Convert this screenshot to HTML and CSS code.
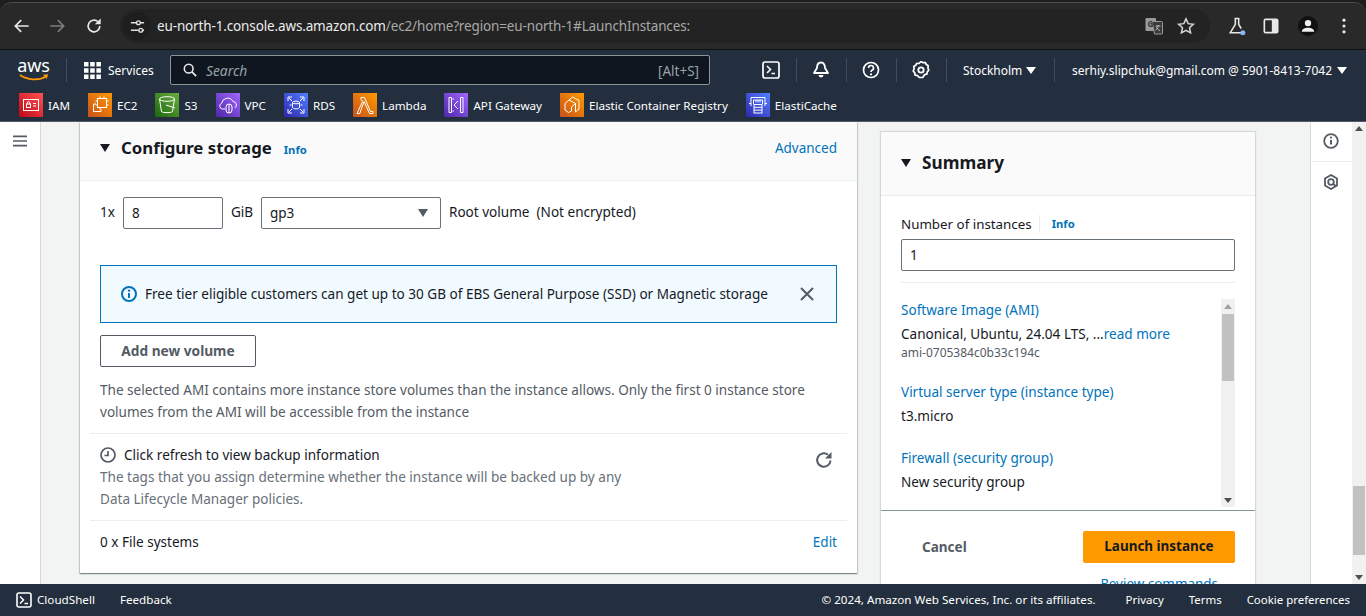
FILE: index.html
```html
<!DOCTYPE html>
<html lang="en">
<head>
<meta charset="utf-8">
<title>Launch an instance | EC2</title>
<link rel="stylesheet" href="styles.css">
</head>
<body>
<div class="app">
  <header class="browser">
   <div class="toolbar">
    <svg class="bi" viewBox="0 0 24 24"><path d="M20 12H5M11 5l-7 7 7 7" fill="none" stroke="#e8e8e8" stroke-width="2"/></svg>
    <svg class="bi bi-fwd" viewBox="0 0 24 24"><path d="M4 12h15M13 5l7 7-7 7" fill="none" stroke="#7d7d7d" stroke-width="2"/></svg>
    <svg class="bi bi-reload" viewBox="0 0 24 24"><path d="M19 12a7 7 0 1 1-2.200-5.100L19 9" fill="none" stroke="#e8e8e8" stroke-width="2"/><path d="M20 3v7h-7z" fill="#e8e8e8"/></svg>
    <div class="omni">
      <span class="tune-chip"><svg class="tune" viewBox="0 0 16 16"><path d="M1 4h6M1 12h8M13 12h2M11 4h4" stroke="#e0e0e0" stroke-width="1.600" fill="none"/><circle cx="9" cy="4" r="2" fill="none" stroke="#e0e0e0" stroke-width="1.500"/><circle cx="11.500" cy="12" r="2" fill="none" stroke="#e0e0e0" stroke-width="1.500"/></svg></span>
      <span class="url"><span class="url-host">eu-north-1.console.aws.amazon.com</span>/ec2/home?region=eu-north-1#LaunchInstances:</span>
      <svg class="translate" viewBox="0 0 18 18"><rect x="0.500" y="1" width="10.500" height="13" rx="1" fill="#9a9a9a"/><path d="M7 4.500h9.500a1 1 0 0 1 1 1V16a1 1 0 0 1-1 1H9.500z" fill="#3a3a3a" stroke="#9a9a9a"/><text x="2.400" y="10" class="translate-g">G</text><path d="M10.500 9h5M13 8v1.500c0 2-1.500 3-2.500 3.500M11.500 10.500c.6 1.300 2 2.500 3.500 3" stroke="#bdbdbd" fill="none"/></svg>
      <svg class="star" viewBox="0 0 24 24"><path d="M12 3.500l2.600 5.700 6.200.7-4.600 4.200 1.300 6.100-5.500-3.100-5.500 3.100 1.300-6.100-4.600-4.200 6.200-.7z" fill="none" stroke="#d8d8d8" stroke-width="1.800"/></svg>
    </div>
    <svg class="bi flask" viewBox="0 0 24 24"><path d="M9 3h6M10 3v7l-6 10h13M14 3v7l3 5" fill="none" stroke="#e8e8e8" stroke-width="1.900"/><circle cx="19" cy="20" r="3" fill="#8ab4f8"/></svg>
    <svg class="bi panel-ic" viewBox="0 0 24 24"><rect x="4" y="4" width="16" height="16" rx="1.500" fill="none" stroke="#e8e8e8" stroke-width="2"/><rect x="13" y="4" width="7" height="16" fill="#e8e8e8"/></svg>
    <span class="profile"><svg viewBox="0 0 24 24"><circle cx="12" cy="8.500" r="3.800" fill="#f0f0f0"/><path d="M4.500 19c0-3.500 4-5 7.500-5s7.500 1.500 7.500 5z" fill="#f0f0f0"/></svg></span>
    <svg class="bi dots" viewBox="0 0 24 24"><circle cx="12" cy="5" r="1.900" fill="#e8e8e8"/><circle cx="12" cy="12" r="1.900" fill="#e8e8e8"/><circle cx="12" cy="19" r="1.900" fill="#e8e8e8"/></svg>
   </div>
  </header>

  <nav class="nav">
    <div class="nav-top">
      <div class="logo"><span class="logo-text">aws</span>
        <svg class="logo-smile" viewBox="0 0 30 8"><path d="M1 1c7 5 19 6 26 1.500" fill="none" stroke="#f90" stroke-width="1.800"/><path d="M24 .8l5-.6-1.200 4.800z" fill="#f90"/></svg>
      </div>
      <span class="vsep vsep-logo"></span>
      <svg class="grid-ic" viewBox="0 0 17 17"><path d="M0 0h4.500v4.500H0zM6.200 0h4.500v4.500H6.200zM12.400 0h4.500v4.500h-4.500zM0 6.200h4.500v4.500H0zM6.200 6.200h4.500v4.500H6.200zM12.400 6.200h4.500v4.500h-4.500zM0 12.400h4.500v4.500H0zM6.200 12.400h4.500v4.500H6.200zM12.400 12.400h4.500v4.500h-4.500z" fill="#fff"/></svg>
      <span class="services">Services</span>
      <div class="search">
        <svg class="search-ic" viewBox="0 0 16 16"><circle cx="6.500" cy="6.500" r="5" fill="none" stroke="#e8eaea" stroke-width="1.800"/><path d="M10.200 10.200L15 15" stroke="#e8eaea" stroke-width="2"/></svg>
        <span class="search-ph">Search</span>
        <span class="search-key">[Alt+S]</span>
      </div>
      <div class="nav-icons">
        <span class="nav-ic"><svg viewBox="0 0 18 18"><rect x="1" y="1" width="16" height="16" rx="2" fill="none" stroke="#fff" stroke-width="1.700"/><path d="M5 5l3.500 3.500L5 12M9.500 12.500H13" fill="none" stroke="#fff" stroke-width="1.600"/></svg></span>
        <span class="vsep"></span>
        <span class="nav-ic"><svg viewBox="0 0 18 18"><path d="M9 1.500c-3 0-4 2.500-4 5.500L2 12h14l-3-5c0-3-1-5.500-4-5.500z" fill="none" stroke="#fff" stroke-width="1.800" stroke-linejoin="round"/><path d="M6.500 14a2.500 2.500 0 0 0 5 0z" fill="#fff"/></svg></span>
        <span class="vsep"></span>
        <span class="nav-ic"><svg viewBox="0 0 18 18"><circle cx="9" cy="9" r="7.500" fill="none" stroke="#fff" stroke-width="1.700"/><path d="M6.500 7a2.500 2.500 0 1 1 3.500 2.300c-.7.300-1 .8-1 1.700" fill="none" stroke="#fff" stroke-width="1.700"/><circle cx="9" cy="13.300" r="1.100" fill="#fff"/></svg></span>
        <span class="vsep"></span>
        <span class="nav-ic"><svg viewBox="0 0 18 18"><path d="M9 1l2 1.200 2.300-.2 1 2 2 1.200-.4 2.300.9 2.100-1.500 1.800-.5 2.300-2.300.5L10.700 17H7.300l-1.800-1.800-2.300-.5-.5-2.300L1.200 10.500l.9-2.100L1.700 6l2-1.200 1-2L7 3z" transform="translate(0 -.5)" fill="none" stroke="#fff" stroke-width="1.700" stroke-linejoin="round"/><circle cx="9" cy="9" r="2.700" fill="none" stroke="#fff" stroke-width="1.800"/></svg></span>
        <span class="vsep"></span>
      </div>
      <span class="region">Stockholm<i class="caret-w"></i></span>
      <span class="vsep"></span>
      <span class="account">serhiy.slipchuk@gmail.com @ 5901-8413-7042<i class="caret-w"></i></span>
    </div>
    <div class="nav-fav">
      <span class="fav"><span class="svc red"><svg viewBox="0 0 24 24"><rect x="4.500" y="6.500" width="15" height="11" fill="none" stroke="#fff"/><rect x="7.500" y="11" width="4" height="3.500" fill="none" stroke="#fff"/><path d="M8.300 11V9.800a1.200 1.200 0 0 1 2.400 0V11M14 10.500h3M14 13h3" fill="none" stroke="#fff"/></svg></span>IAM</span>
      <span class="fav"><span class="svc orange"><svg viewBox="0 0 24 24"><rect x="9.500" y="5.500" width="9" height="9" fill="none" stroke="#fff"/><path d="M8 18.500H5.500V11H8M5.500 18.500H13V16M12 3.500v2M16 3.500v2M12 14.500v2M20.500 8h-2M20.500 12h-2M7.500 8h2M7.500 12h2" fill="none" stroke="#fff"/></svg></span>EC2</span>
      <span class="fav"><span class="svc green"><svg viewBox="0 0 24 24"><ellipse cx="12" cy="6" rx="7.500" ry="2.300" fill="none" stroke="#fff"/><path d="M4.500 6l2 12.500c.5 1.500 10.500 1.500 11 0l2-12.500M11 12l9 3" fill="none" stroke="#fff"/></svg></span>S3</span>
      <span class="fav"><span class="svc purple"><svg viewBox="0 0 24 24"><path d="M9 16H6.500a3 3 0 0 1-.8-5.800A6 6 0 0 1 17 8.500a3.500 3.500 0 0 1 2 6.300" fill="none" stroke="#fff"/><rect x="10" y="11" width="6" height="9" rx="3" fill="none" stroke="#fff"/><path d="M13 11v9" stroke="#fff"/></svg></span>VPC</span>
      <span class="fav"><span class="svc blue"><svg viewBox="0 0 24 24"><path d="M4 8V4h4M16 4h4v4M4 16v4h4M20 16v4h-4M5 5l3 3M19 5l-3 3M5 19l3-3M19 19l-3-3" fill="none" stroke="#fff"/><ellipse cx="12" cy="9.500" rx="3.500" ry="1.300" fill="none" stroke="#fff"/><path d="M8.500 9.500v5c0 1.800 7 1.800 7 0v-5M5.500 12H7.500M16.500 12h2" fill="none" stroke="#fff"/></svg></span>RDS</span>
      <span class="fav"><span class="svc orange"><svg viewBox="0 0 24 24"><path d="M8 4.500h3.500L17.500 18.500H20v2h-3.500L11 8.500 6.800 20.500H4l5.500-12-1.500-2z" fill="none" stroke="#fff"/></svg></span>Lambda</span>
      <span class="fav"><span class="svc purple"><svg viewBox="0 0 24 24"><path d="M5 4.500h2.500v15H5zM16.500 4.500H19v15h-2.500zM14 8l-4 4 4 4M8.500 6H10M8.500 18H10" fill="none" stroke="#fff"/></svg></span>API Gateway</span>
      <span class="fav"><span class="svc orange"><svg viewBox="0 0 24 24"><path d="M12.500 4L19 7.500v8.500l-3.500 3V10.500L9 7zM9 7l-4 3.500V17l3.500 2.500 3-1.500M15.500 10.500l-4 3.500v4" fill="none" stroke="#fff"/></svg></span>Elastic Container Registry</span>
      <span class="fav"><span class="svc blue"><svg viewBox="0 0 24 24"><path d="M5 13V4.500h14V13M7.500 11V7h9v4M10 7v2.500M12 7v2.500M14 7v2.500M3 10.500h2M19 10.500h2" fill="none" stroke="#fff"/><rect x="8" y="11.500" width="8" height="8.500" fill="none" stroke="#fff"/><path d="M8 14.300h8M8 17.100h8" stroke="#fff"/></svg></span>ElastiCache</span>
    </div>
  </nav>

  <div class="main">
    <aside class="side">
      <svg class="burger" viewBox="0 0 15 12"><path d="M0 1h15M0 6h15M0 11h15" stroke="#545b64" stroke-width="1.800"/></svg>
    </aside>
    <div class="content">
      <section class="panel">
        <div class="panel-head">
          <i class="caret-d"></i>
          <h2 class="panel-title">Configure storage</h2>
          <a class="info info-head">Info</a>
          <a class="advanced">Advanced</a>
        </div>
        <div class="vol-row">
          <span class="vol-x">1x</span>
          <span class="input input-size">8</span>
          <span class="vol-unit">GiB</span>
          <span class="input input-type">gp3<i class="caret-g"></i></span>
          <span class="vol-text">Root volume&nbsp; (Not encrypted)</span>
        </div>
        <div class="alert">
          <svg class="alert-ic" viewBox="0 0 16 16"><circle cx="8" cy="8" r="7" fill="none" stroke="#0073bb" stroke-width="2"/><path d="M8 7v5" stroke="#0073bb" stroke-width="2"/><circle cx="8" cy="4.600" r="1.200" fill="#0073bb"/></svg>
          <span class="alert-text">Free tier eligible customers can get up to 30 GB of EBS General Purpose (SSD) or Magnetic storage</span>
          <svg class="alert-x" viewBox="0 0 14 14"><path d="M1 1l12 12M13 1L1 13" stroke="#545b64" stroke-width="2"/></svg>
        </div>
        <button class="btn-add">Add new volume</button>
        <p class="note">The selected AMI contains more instance store volumes than the instance allows. Only the first 0 instance store volumes from the AMI will be accessible from the instance</p>
        <div class="backup">
          <div class="backup-main">
            <div class="backup-title"><svg class="clock" viewBox="0 0 16 16"><circle cx="8" cy="8" r="7" fill="none" stroke="#545b64" stroke-width="1.700"/><path d="M8 4v4.500H4.500" fill="none" stroke="#545b64" stroke-width="1.700"/></svg>Click refresh to view backup information</div>
            <p class="backup-desc">The tags that you assign determine whether the instance will be backed up by any<br>Data Lifecycle Manager policies.</p>
          </div>
          <svg class="refresh" viewBox="0 0 18 18"><path d="M15.500 9.500A6.700 6.700 0 1 1 13 3.800" fill="none" stroke="#545b64" stroke-width="2"/><path d="M16.500 1v6.500H10z" fill="#545b64"/></svg>
        </div>
        <div class="fs-row"><span>0 x File systems</span><a class="edit">Edit</a></div>
      </section>

      <aside class="summary">
        <div class="sum-head"><i class="caret-d"></i><h2 class="sum-title">Summary</h2></div>
        <div class="sum-body">
          <div class="sum-label"><span>Number of instances</span><a class="info info-sum">Info</a></div>
          <div class="input input-count">1</div>
          <div class="sum-list">
            <div class="sum-items">
              <a class="sum-link">Software Image (AMI)</a>
              <div class="sum-val">Canonical, Ubuntu, 24.04 LTS, ...<a class="read">read more</a></div>
              <div class="sum-sub">ami-0705384c0b33c194c</div>
              <a class="sum-link sum-gap">Virtual server type (instance type)</a>
              <div class="sum-val">t3.micro</div>
              <a class="sum-link sum-gap2">Firewall (security group)</a>
              <div class="sum-val">New security group</div>
            </div>
            <div class="sb sb-inner"><i class="sb-up"></i><i class="sb-thumb"></i><i class="sb-down"></i></div>
          </div>
        </div>
        <div class="sum-foot">
          <div class="sum-actions"><span class="cancel">Cancel</span><button class="launch">Launch instance</button></div>
          <a class="review">Review commands</a>
        </div>
      </aside>
    </div>
    <div class="rail">
      <div class="rail-cell rail-first"><svg viewBox="0 0 16 16"><circle cx="8" cy="8" r="6.800" fill="none" stroke="#545b64" stroke-width="1.800"/><path d="M8 7v4.500" stroke="#545b64" stroke-width="2"/><circle cx="8" cy="4.600" r="1.100" fill="#545b64"/></svg></div>
      <div class="rail-cell"><svg viewBox="0 0 16 16"><path d="M8 1l6 3.500v7L8 15l-6-3.500v-7z" fill="none" stroke="#545b64" stroke-width="1.800"/><circle cx="8" cy="8" r="2.800" fill="none" stroke="#545b64" stroke-width="1.800"/><path d="M10 10l3 2" stroke="#545b64" stroke-width="1.800"/></svg></div>
    </div>
    <div class="sb sb-page"><i class="sb-up"></i><i class="sb-thumb"></i><i class="sb-down"></i></div>
  </div>

  <footer class="foot">
    <svg class="foot-ic" viewBox="0 0 16 16"><rect x="1" y="1" width="14" height="14" rx="2" fill="none" stroke="#fff" stroke-width="1.600"/><path d="M4 4.500L7.500 8 4 11.500M8.500 11.500H12" fill="none" stroke="#fff" stroke-width="1.500"/></svg>
    <span class="foot-shell">CloudShell</span>
    <span class="foot-fb">Feedback</span>
    <span class="foot-copy">© 2024, Amazon Web Services, Inc. or its affiliates.</span>
    <span class="foot-link">Privacy</span>
    <span class="foot-link">Terms</span>
    <span class="foot-link">Cookie preferences</span>
  </footer>
</div>
</body>
</html>
```

FILE: styles.css
```css
* { box-sizing: border-box; }
html, body { margin: 0; height: 100%; overflow: hidden; }
body { font-family: "Noto Sans", "Open Sans", sans-serif; font-size: 13.550px; color: #16191f; }
a { color: #0073bb; text-decoration: none; }
h2, p { margin: 0; font: inherit; }
i { display: block; font-style: normal; }
.app { display: flex; flex-direction: column; height: 616px; width: 1366px; }

/* browser chrome */
.browser { height: 50px; flex: none; background: #1e1e1e; padding-top: 2px; border-bottom: 1px solid #111; display: flex; }
.toolbar { flex: 1; background: #292929; border-top: 1px solid #4a4a4a; border-radius: 12px 12px 0 0; display: flex; align-items: center; padding: 0 10px 0 12px; }
.bi { width: 20px; height: 20px; flex: none; }
.bi-fwd { margin-left: 15px; }
.bi-reload { margin-left: 17px; }
.omni { margin-left: 16px; width: 1090px; height: 34px; background: #232323; border-radius: 17px; display: flex; align-items: center; padding-left: 3px; color: #a0a0a0; }
.tune-chip { width: 28px; height: 28px; flex: none; border-radius: 50%; background: #1e1e1e; display: flex; align-items: center; justify-content: center; }
.tune { width: 15px; height: 15px; }
.url { margin-left: 6px; font-size: 13.500px; letter-spacing: -.14px; white-space: nowrap; color: #a8a8a8; }
.url-host { color: #ececec; }
.translate { width: 18px; height: 18px; margin-left: auto; }
.translate-g { font-size: 8px; font-weight: 700; fill: #333; }
.star { width: 20px; height: 20px; margin-left: 13px; margin-right: 14px; }
.flask { margin-left: 17px; }
.panel-ic { margin-left: 14px; }
.profile { width: 20px; height: 20px; margin-left: 17px; background: #111; border-radius: 50%; display: block; flex: none; }
.profile svg { display: block; }
.dots { margin-left: 16px; }

/* aws nav */
.nav { height: 72px; flex: none; background: #232f3e; border-bottom: 1px solid #545b64; color: #fff; display: flex; flex-direction: column; }
.nav-top { height: 35px; display: flex; align-items: center; padding: 5px 0 0 18px; font-size: 12px; }
.logo { width: 31px; height: 26px; display: flex; flex-direction: column; align-items: center; flex: none; }
.logo-text { font-size: 18px; line-height: 17px; letter-spacing: -.2px; color: #fff; }
.logo-smile { width: 30px; height: 8px; }
.vsep { width: 1px; height: 24px; background: #414d5c; flex: none; }
.vsep-logo { margin-left: 17px; }
.grid-ic { width: 17px; height: 17px; margin-left: 17px; flex: none; }
.services { margin-left: 7px; width: 62px; flex: none; }
.search { width: 540px; height: 30px; flex: none; background: #0f1620; border: 1px solid #879596; border-radius: 2px; display: flex; align-items: center; padding: 0 10px 0 12px; color: #95a5a6; }
.search-ic { width: 14px; height: 14px; }
.search-ph { margin-left: 9px; font-style: italic; font-size: 13.800px; padding-top: 1px; }
.search-key { margin-left: auto; font-size: 13.500px; padding-top: 1px; }
.nav-icons { display: flex; align-items: center; margin-left: 52px; }
.nav-ic { width: 18px; height: 18px; flex: none; display: block; }
.nav-ic svg { display: block; }
.nav-ic + .vsep { margin-left: 16px; margin-right: 15px; }
.nav-icons .vsep:last-child { margin-right: 16px; }
.region { display: flex; align-items: center; gap: 4px; width: 91px; flex: none; }
.account { display: flex; align-items: center; gap: 5px; margin-left: 17px; flex: none; white-space: nowrap; }
.caret-w { width: 0; height: 0; border: 5px solid transparent; border-top: 7px solid #fff; border-bottom: 0; }
.nav-fav { height: 36px; display: flex; align-items: center; gap: 18px; padding: 4px 0 0 19px; font-size: 11.650px; }
.fav { display: flex; align-items: center; gap: 5px; white-space: nowrap; color: #fff; }
.svc { width: 24px; height: 24px; display: block; flex: none; }
.svc svg { display: block; }
.red { background: linear-gradient(45deg, #bd0816, #ff5252); }
.orange { background: linear-gradient(45deg, #c8511b, #f90); }
.green { background: linear-gradient(45deg, #1b660f, #6cae3e); }
.purple { background: linear-gradient(45deg, #4d27a8, #a166ff); }
.blue { background: linear-gradient(45deg, #2e27ad, #527fff); }

/* main */
.main { flex: 1; min-height: 0; display: flex; overflow: hidden; background: #f2f3f3; }
.side { width: 41px; flex: none; background: #fff; border-right: 1px solid #d5dbdb; padding: 13px 0 0 13px; }
.burger { width: 14px; height: 12px; display: block; }
.content { flex: none; width: 1269px; padding-left: 39px; display: flex; gap: 24px; align-items: flex-start; }
.panel { width: 777px; height: 451px; flex: none; background: #fff; box-shadow: 0 1px 1px 0 rgba(0,28,36,.3), 1px 1px 1px 0 rgba(0,28,36,.15), -1px 1px 1px 0 rgba(0,28,36,.15); padding: 0 20px; }
.panel-head { height: 59px; margin: 0 -20px; padding: 0 20px 6px; background: #fafafa; border-bottom: 1px solid #eaeded; display: flex; align-items: center; }
.caret-d { width: 0; height: 0; border: 5.500px solid transparent; border-top: 8px solid #16191f; border-bottom: 0; flex: none; }
.panel-title { font-size: 16.800px; font-weight: 700; margin: -2px 0 0 11px; }
.info { font-size: 11.200px; font-weight: 700; }
.info-head { margin-left: 12px; margin-top: 3px; }
.advanced { margin-left: auto; font-size: 13.500px; }
.vol-row { display: flex; align-items: center; gap: 8px; margin-top: 16px; height: 32px; }
.vol-x { width: 15px; flex: none; padding-bottom: 2px; }
.vol-unit { width: 22px; flex: none; white-space: nowrap; padding-bottom: 2px; }
.vol-text { padding-bottom: 2px; }
.input { border: 1px solid #687078; border-radius: 2px; background: #fff; display: flex; align-items: center; padding: 0 8px; font-size: 13.500px; height: 32px; flex: none; }
.input-size { width: 100px; }
.input-type { width: 180px; justify-content: space-between; padding-right: 12px; }
.caret-g { width: 0; height: 0; border: 5.500px solid transparent; border-top: 8px solid #545b64; border-bottom: 0; }
.alert { height: 58px; margin-top: 36px; border: 1px solid #0073bb; background: #f1faff; display: flex; align-items: center; padding: 0 22px 0 20px; }
.alert-ic { width: 16px; height: 16px; flex: none; }
.alert-text { margin-left: 8px; }
.alert-x { width: 14px; height: 14px; margin-left: auto; }
.btn-add { display: block; margin-top: 12px; width: 156px; height: 32px; background: #fff; border: 1px solid #545b64; border-radius: 2px; color: #545b64; font: 700 13.700px "Noto Sans", sans-serif; padding: 0 0 2px; }
.note { margin-top: 12px; color: #545b64; line-height: 22px; width: 737px; }
.backup { margin: 10px -10px 0; padding: 10px 14px 0 10px; border-top: 1px solid #eaeded; display: flex; justify-content: space-between; height: 87px; }
.backup-title { display: flex; align-items: center; gap: 8px; line-height: 22px; }
.clock { width: 16px; height: 16px; flex: none; }
.backup-desc { color: #687078; line-height: 22px; }
.refresh { width: 18px; height: 18px; margin-top: 7px; }
.fs-row { margin: 0 -10px; padding: 0 10px 2px; border-top: 1px solid #eaeded; height: 44px; display: flex; align-items: center; justify-content: space-between; }
.edit { font-size: 13.500px; }

/* summary */
.summary { width: 374px; margin-top: 10px; height: 500px; flex: none; background: #fff; box-shadow: 0 0 1px 1px rgba(0,28,36,.12); }
.sum-head { height: 64px; background: #fafafa; border-bottom: 1px solid #eaeded; padding: 0 0 2px 20px; display: flex; align-items: center; }
.sum-title { font-size: 17.200px; font-weight: 700; margin-left: 11px; }
.sum-body { padding: 17px 20px 0; height: 314px; }
.sum-label { display: flex; align-items: center; height: 22px; }
.sum-label span { font-size: 13.350px; }
.info-sum { border-left: 1px solid #eaeded; margin-left: 7px; padding-left: 12px; line-height: 18px; }
.input-count { margin-top: 4px; height: 32px; }
.sum-list { margin-top: 11px; padding-top: 16px; border-top: 1px solid #eaeded; display: flex; height: 224px; }
.sum-items { flex: 1; line-height: 22px; padding-top: 0; }
.sum-link { display: block; }
.sum-val { margin-top: 2px; }
.sum-sub { font-size: 12px; color: #545b64; line-height: 14px; margin-top: 1px; }
.sum-gap { margin-top: 21px; }
.sum-gap2 { margin-top: 20px; }
.sb { background: #f1f1f1; display: flex; flex-direction: column; position: relative; }
.sb-inner { width: 14px; height: 208px; }
.sb-page { width: 14px; flex: none; }
.sb-up { width: 0; height: 0; margin: 5px auto 0; border: 4px solid transparent; border-bottom: 5px solid #a3a3a3; border-top: 0; }
.sb-down { width: 0; height: 0; margin: auto auto 4px; border: 4px solid transparent; border-top: 5px solid #505050; border-bottom: 0; }
.sb-thumb { background: #c1c1c1; margin: 0 1px; }
.sb-inner .sb-thumb { height: 67px; margin-top: 5px; }
.sb-page .sb-thumb { position: absolute; left: 1px; right: 1px; top: 364px; height: 69px; margin: 0; }
.sb-page .sb-up { margin-top: 4px; border-bottom-color: #505050; }
.sum-foot { border-top: 1px solid #879596; padding: 20px 20px 0; }
.sum-actions { display: flex; align-items: center; justify-content: space-between; padding-left: 21px; }
.cancel { color: #545b64; font-weight: 700; }
.launch { width: 152px; height: 32px; border: 0; border-radius: 2px; background: #f90; font: 700 13.450px "Noto Sans", sans-serif; color: #16191f; padding: 0 0 2px; }
.review { display: block; text-align: right; margin: 11px 17px 0 0; font-size: 13.450px; }

/* rail */
.rail { width: 42px; flex: none; margin-left: 0; background: #fff; border-left: 1px solid #d5dbdb; }
.rail-cell { height: 40px; padding-right: 1px; display: flex; align-items: center; justify-content: center; }
.rail-first { border-bottom: 1px solid #eaeded; padding-bottom: 1px; }
.rail-cell svg { width: 16px; height: 16px; }

/* footer */
.foot { height: 32px; flex: none; background: #232f3e; color: #fff; display: flex; align-items: center; padding: 0 16px 1px; font-size: 11.650px; }
.foot-ic { width: 16px; height: 16px; flex: none; }
.foot-shell { margin-left: 5px; }
.foot-fb { margin-left: 25px; }
.foot-copy { margin-left: auto; margin-right: 5px; }
.foot-link { margin-left: 25px; font-size: 11.450px; }
```
